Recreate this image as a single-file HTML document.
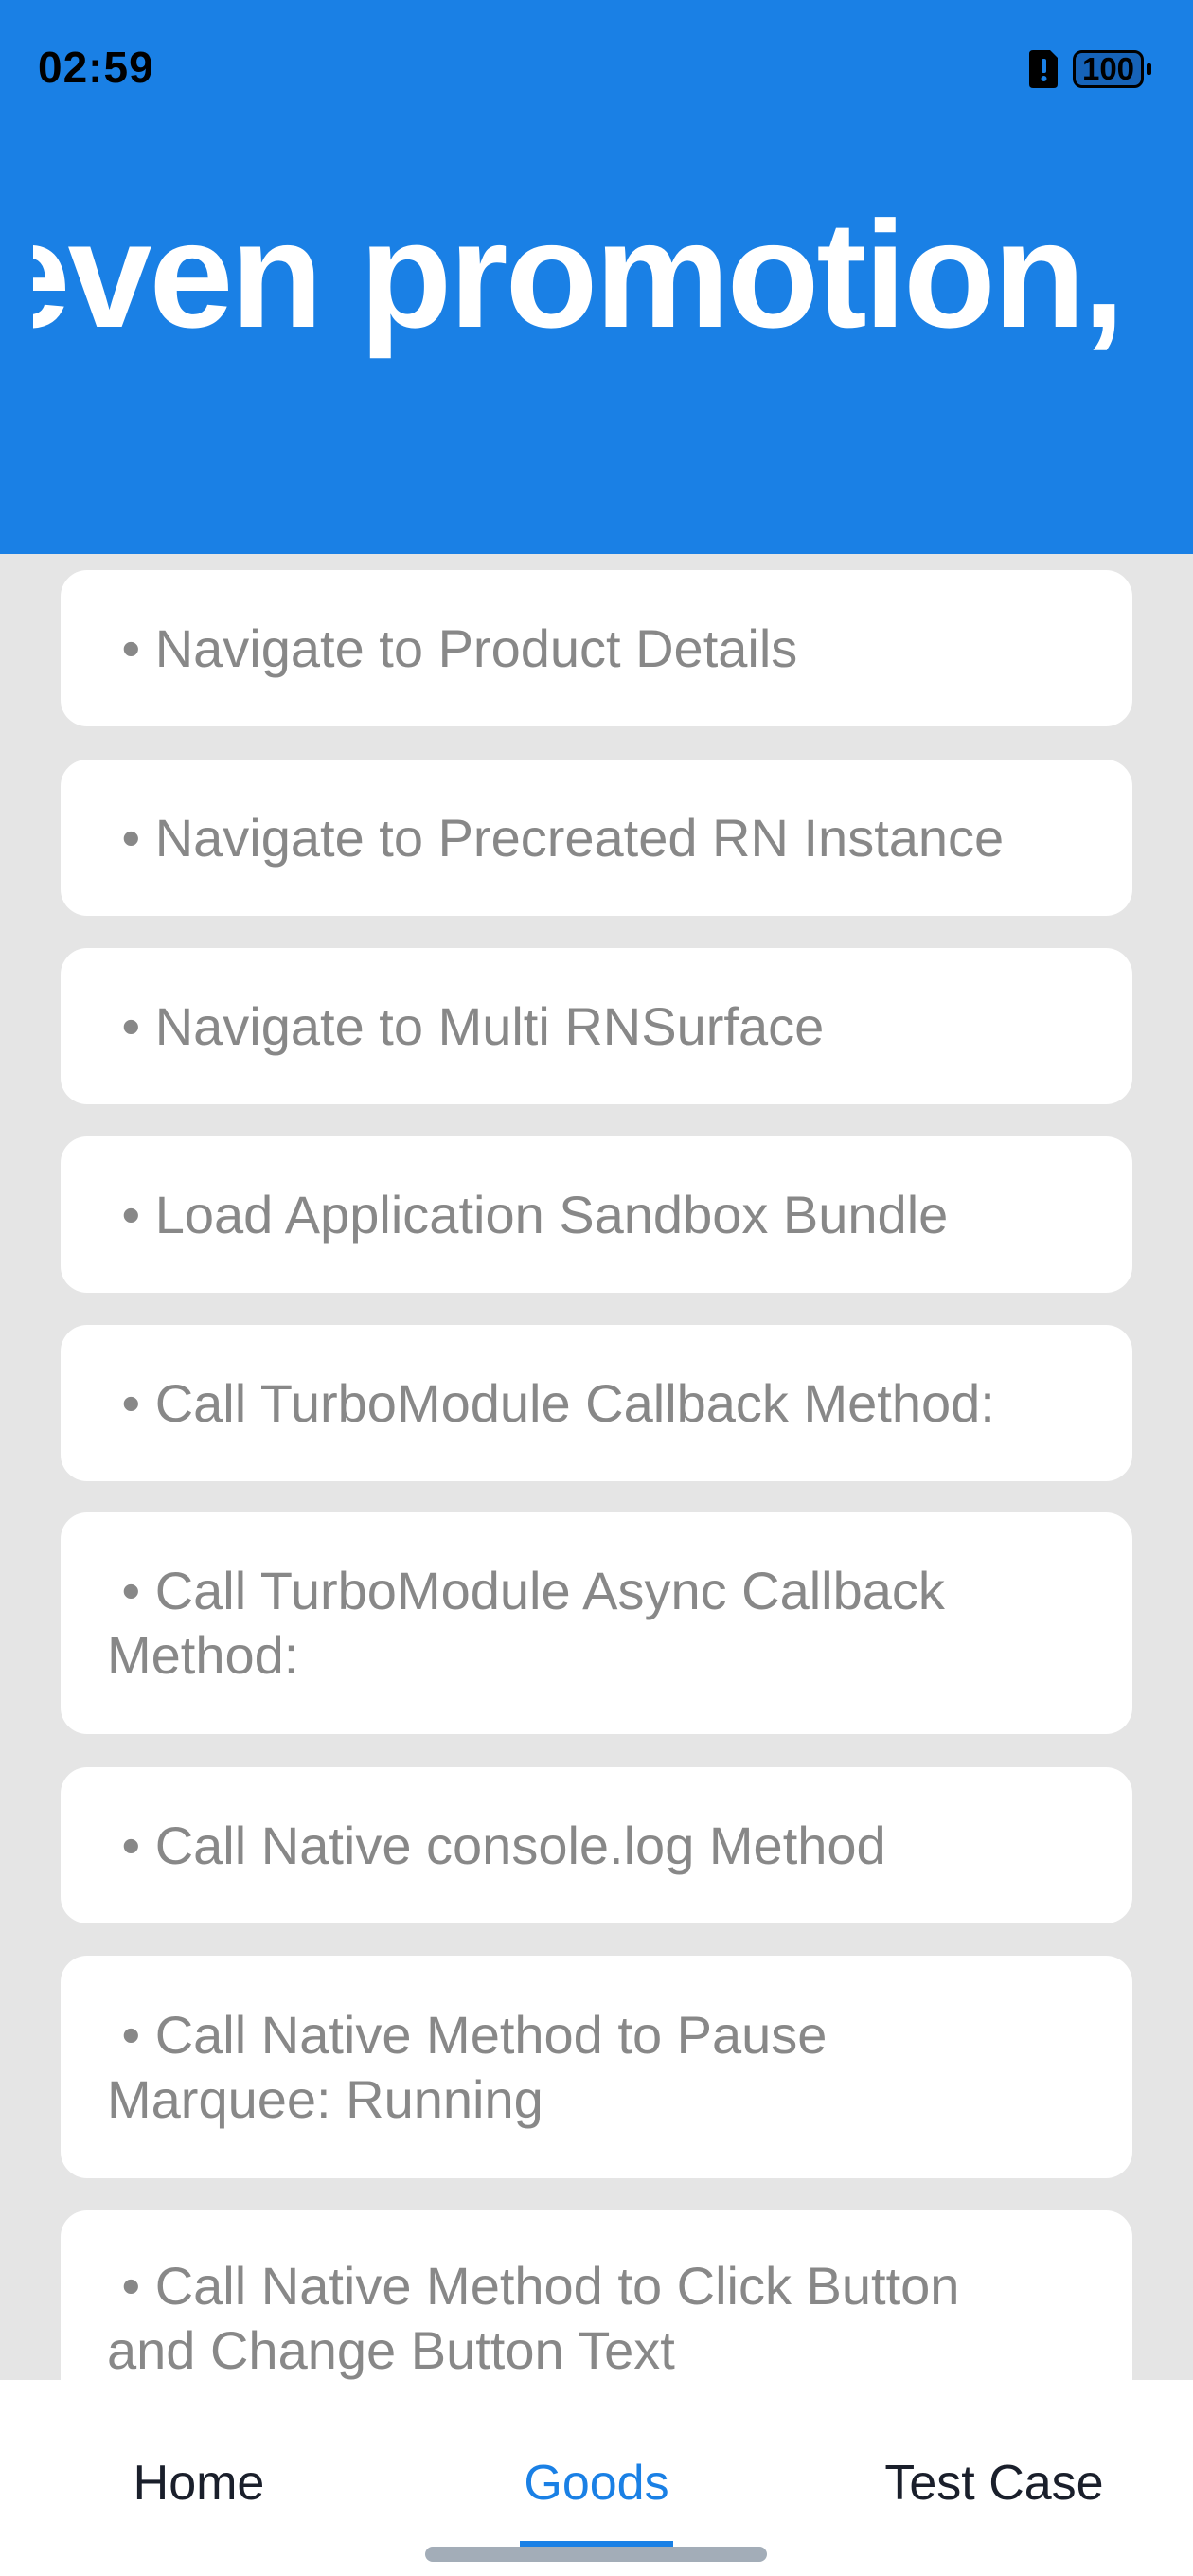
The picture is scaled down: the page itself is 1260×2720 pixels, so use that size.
<!DOCTYPE html>
<html><head><meta charset="utf-8"><style>
*{margin:0;padding:0;box-sizing:border-box}
body{width:1260px;height:2720px;background:#e5e5e5;position:relative;overflow:hidden;font-family:"Liberation Sans",sans-serif}
.hdr{position:absolute;left:0;top:0;width:1260px;height:585px;background:#1a80e5}
.time{position:absolute;left:40px;top:44px;font-size:46px;font-weight:bold;color:#000;letter-spacing:1px}
.clip{position:absolute;left:35px;top:165px;width:1225px;height:250px;overflow:hidden}
.mq{position:absolute;right:75px;top:0;white-space:nowrap;color:#fff;font-weight:bold;font-size:160px;line-height:250px;letter-spacing:-3px}
.card{position:absolute;left:64px;width:1132px;background:#fff;border-radius:28px;display:flex;align-items:center;padding:0 30px 0 49px;color:#888;font-size:56px;line-height:68px}
.tab{position:absolute;left:0;top:2513px;width:1260px;height:207px;background:#fff}
.tl{position:absolute;top:2592px;font-size:52px;color:#1a1f2b;transform:translateX(-50%);white-space:nowrap}
</style></head><body>
<div class="hdr">
<div class="time">02:59</div>
<svg style="position:absolute;left:1087px;top:53px" width="32" height="40" viewBox="0 0 32 40"><path d="M4 0H22L30 8V36Q30 40 26 40H4Q0 40 0 36V4Q0 0 4 0Z" fill="#000"/><rect x="13" y="9" width="5" height="15" rx="2" fill="#1a80e5"/><circle cx="15.5" cy="30" r="3" fill="#1a80e5"/></svg>
<div style="position:absolute;left:1133px;top:53px;width:75px;height:40px;border:3px solid #000;border-radius:10px;background:#1663b8;font-size:33px;font-weight:bold;color:#000;text-align:center;line-height:34px">100</div>
<div style="position:absolute;left:1211px;top:67px;width:5px;height:12px;background:#000;border-radius:2px"></div>
<div class="clip"><div class="mq">even promotion,</div></div>
</div>
<div class="card" style="top:602px;height:165px">&nbsp;•&nbsp;Navigate to Product Details</div>
<div class="card" style="top:802px;height:165px">&nbsp;•&nbsp;Navigate to Precreated RN Instance</div>
<div class="card" style="top:1001px;height:165px">&nbsp;•&nbsp;Navigate to Multi RNSurface</div>
<div class="card" style="top:1200px;height:165px">&nbsp;•&nbsp;Load Application Sandbox Bundle</div>
<div class="card" style="top:1399px;height:165px">&nbsp;•&nbsp;Call TurboModule Callback Method:</div>
<div class="card" style="top:1597px;height:234px"><div>&nbsp;•&nbsp;Call TurboModule Async Callback<br>Method:</div></div>
<div class="card" style="top:1866px;height:165px">&nbsp;•&nbsp;Call Native console.log Method</div>
<div class="card" style="top:2065px;height:235px"><div>&nbsp;•&nbsp;Call Native Method to Pause<br>Marquee: Running</div></div>
<div class="card" style="top:2334px;height:235px;align-items:flex-start;padding-top:46px"><div>&nbsp;•&nbsp;Call Native Method to Click Button<br>and Change Button Text</div></div>
<div class="tab"></div>
<div class="tl" style="left:210px">Home</div>
<div class="tl" style="left:630px;color:#1a80e5">Goods</div>
<div class="tl" style="left:1050px">Test Case</div>
<div style="position:absolute;left:549px;top:2683px;width:162px;height:6px;background:#1a80e5"></div>
<div style="position:absolute;left:449px;top:2689px;width:361px;height:16px;background:#a3adb8;border-radius:8px"></div>
</body></html>
